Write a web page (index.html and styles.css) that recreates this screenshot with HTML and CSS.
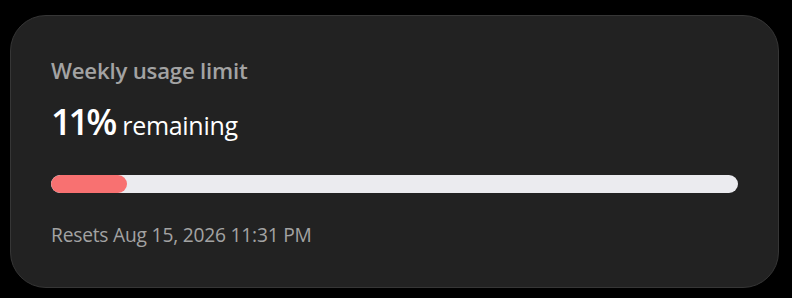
FILE: index.html
```html
<!DOCTYPE html>
<html>
<head>
<meta charset="utf-8">
<link rel="stylesheet" href="styles.css">
</head>
<body>
<div class="card">
  <div class="title">Weekly usage limit</div>
  <div class="value"><span class="pct">11%</span><span class="rem">remaining</span></div>
  <div class="track"><div class="fill" style="width: 11%"></div></div>
  <div class="reset">Resets Aug 15, 2026 11:31 PM</div>
</div>
</body>
</html>
```
FILE: styles.css
```css
html, body {
  margin: 0;
  background: #000;
}
body {
  padding: 15px 13px 10px 10px;
  font-family: "Open Sans", "Noto Sans", sans-serif;
}
.card {
  box-sizing: border-box;
  width: 769px;
  height: 273px;
  background: #222222;
  border: 1px solid #363636;
  border-radius: 36px;
  padding: 41px 40px 0 40px;
  display: flex;
  flex-direction: column;
}
.title {
  color: #a3a3a3;
  font-size: 22.2px;
  font-weight: 600;
  line-height: 28px;
  letter-spacing: -0.2px;
}
.value {
  margin-top: 15px;
  color: #ffffff;
  line-height: 44px;
  height: 44px;
  display: flex;
  align-items: baseline;
  gap: 8px;
}
.pct {
  font-size: 36px;
  font-weight: 600;
  letter-spacing: -3px;
}
.rem {
  font-size: 25px;
  letter-spacing: -0.3px;
}
.track {
  margin-top: 31px;
  height: 18px;
  border-radius: 9px;
  background: #ebebef;
  overflow: hidden;
}
.fill {
  height: 100%;
  background: #f87171;
  border-radius: 9px;
}
.reset {
  margin-top: 30px;
  color: #a3a3a3;
  font-size: 19.2px;
  line-height: 24px;
  letter-spacing: -0.2px;
}
```
